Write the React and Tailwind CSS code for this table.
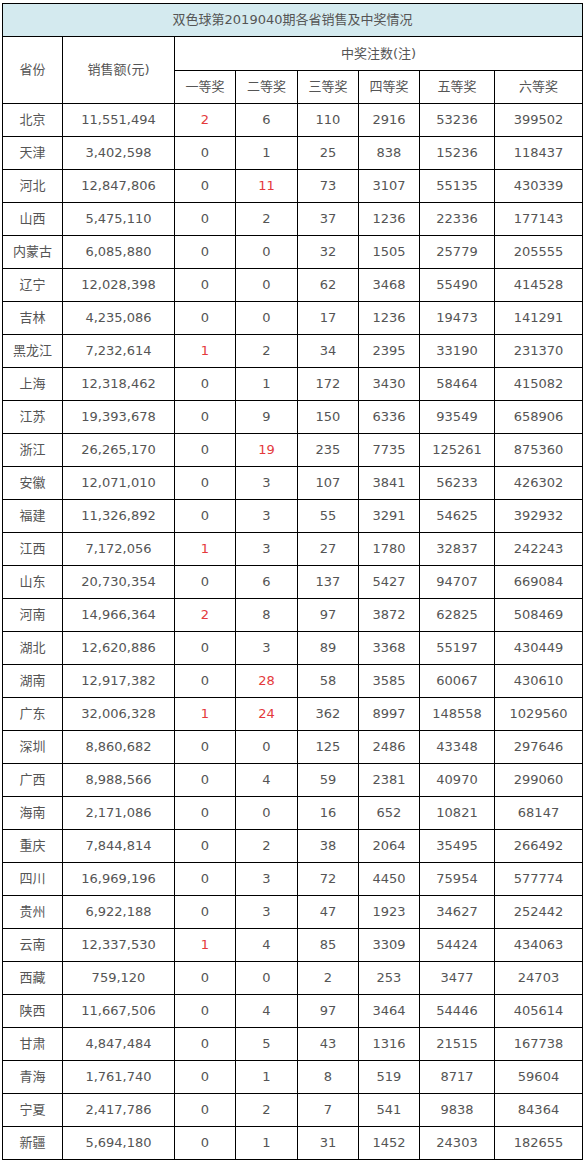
const rows = [
  ["北京", "11,551,494", 2, 6, 110, 2916, 53236, 399502],
  ["天津", "3,402,598", 0, 1, 25, 838, 15236, 118437],
  ["河北", "12,847,806", 0, 11, 73, 3107, 55135, 430339],
  ["山西", "5,475,110", 0, 2, 37, 1236, 22336, 177143],
  ["内蒙古", "6,085,880", 0, 0, 32, 1505, 25779, 205555],
  ["辽宁", "12,028,398", 0, 0, 62, 3468, 55490, 414528],
  ["吉林", "4,235,086", 0, 0, 17, 1236, 19473, 141291],
  ["黑龙江", "7,232,614", 1, 2, 34, 2395, 33190, 231370],
  ["上海", "12,318,462", 0, 1, 172, 3430, 58464, 415082],
  ["江苏", "19,393,678", 0, 9, 150, 6336, 93549, 658906],
  ["浙江", "26,265,170", 0, 19, 235, 7735, 125261, 875360],
  ["安徽", "12,071,010", 0, 3, 107, 3841, 56233, 426302],
  ["福建", "11,326,892", 0, 3, 55, 3291, 54625, 392932],
  ["江西", "7,172,056", 1, 3, 27, 1780, 32837, 242243],
  ["山东", "20,730,354", 0, 6, 137, 5427, 94707, 669084],
  ["河南", "14,966,364", 2, 8, 97, 3872, 62825, 508469],
  ["湖北", "12,620,886", 0, 3, 89, 3368, 55197, 430449],
  ["湖南", "12,917,382", 0, 28, 58, 3585, 60067, 430610],
  ["广东", "32,006,328", 1, 24, 362, 8997, 148558, 1029560],
  ["深圳", "8,860,682", 0, 0, 125, 2486, 43348, 297646],
  ["广西", "8,988,566", 0, 4, 59, 2381, 40970, 299060],
  ["海南", "2,171,086", 0, 0, 16, 652, 10821, 68147],
  ["重庆", "7,844,814", 0, 2, 38, 2064, 35495, 266492],
  ["四川", "16,969,196", 0, 3, 72, 4450, 75954, 577774],
  ["贵州", "6,922,188", 0, 3, 47, 1923, 34627, 252442],
  ["云南", "12,337,530", 1, 4, 85, 3309, 54424, 434063],
  ["西藏", "759,120", 0, 0, 2, 253, 3477, 24703],
  ["陕西", "11,667,506", 0, 4, 97, 3464, 54446, 405614],
  ["甘肃", "4,847,484", 0, 5, 43, 1316, 21515, 167738],
  ["青海", "1,761,740", 0, 1, 8, 519, 8717, 59604],
  ["宁夏", "2,417,786", 0, 2, 7, 541, 9838, 84364],
  ["新疆", "5,694,180", 0, 1, 31, 1452, 24303, 182655],
]

const prizes = ["一等奖", "二等奖", "三等奖", "四等奖", "五等奖", "六等奖"]
const widths = ["w-[60px]", "w-[112px]", "w-[61px]", "w-[62px]", "w-[61px]", "w-[61px]", "w-[75px]", "w-[88px]"]

const cell = "border border-black text-center p-0"

export default function App() {
  return (
    <div className="bg-white pt-[3px] pl-[2px] pb-[2px]">
      <table
        className="table-fixed border-collapse w-[580px] text-[13px] text-[#555]"
        style={{ fontFamily: '"DejaVu Sans", "Noto Sans CJK SC", sans-serif' }}
      >
        <colgroup>
          {widths.map((w, i) => (
            <col key={i} className={w} />
          ))}
        </colgroup>
        <thead>
          <tr className="h-[33px]">
            <th colSpan={8} className={`${cell} font-normal bg-[#d4eaef]`}>
              双色球第2019040期各省销售及中奖情况
            </th>
          </tr>
          <tr className="h-[34px]">
            <th rowSpan={2} className={`${cell} font-normal`}>省份</th>
            <th rowSpan={2} className={`${cell} font-normal`}>销售额(元)</th>
            <th colSpan={6} className={`${cell} font-normal`}>中奖注数(注)</th>
          </tr>
          <tr className="h-[33px]">
            {prizes.map((p) => (
              <th key={p} className={`${cell} font-normal`}>{p}</th>
            ))}
          </tr>
        </thead>
        <tbody>
          {rows.map((r) => (
            <tr key={r[0]} className="h-[33px]">
              <td className={cell}>{r[0]}</td>
              <td className={cell}>{r[1]}</td>
              <td className={`${cell} ${r[2] > 0 ? "text-[#e4393c]" : ""}`}>{r[2]}</td>
              <td className={`${cell} ${r[3] >= 10 ? "text-[#e4393c]" : ""}`}>{r[3]}</td>
              <td className={cell}>{r[4]}</td>
              <td className={cell}>{r[5]}</td>
              <td className={cell}>{r[6]}</td>
              <td className={cell}>{r[7]}</td>
            </tr>
          ))}
        </tbody>
      </table>
    </div>
  )
}
